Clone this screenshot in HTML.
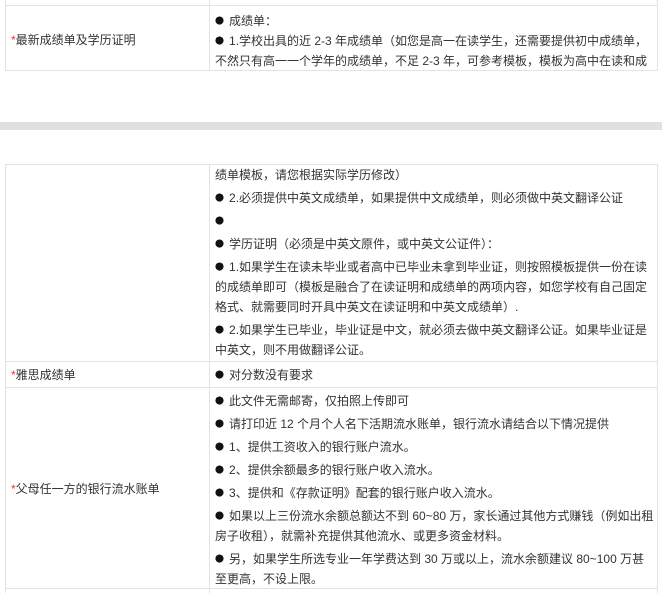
<!DOCTYPE html>
<html><head><meta charset="utf-8"><style>
body{margin:0;width:662px;height:593px;background:#fff;position:relative;overflow:hidden;font-family:"Liberation Sans","Noto Sans CJK SC",sans-serif;font-size:12px;color:#333}
.l{position:absolute;left:215px;height:20px;line-height:20px;white-space:nowrap}
.k{position:absolute;left:11px;height:20px;line-height:20px;white-space:nowrap}
.k b{color:#e33;font-weight:normal}
.h{position:absolute;left:5px;width:652px;height:1px;background:#e3e3e3}
.v{position:absolute;width:1px;background:#e3e3e3}
i{font-style:normal;font-family:"Noto Sans CJK SC",sans-serif;font-size:9px;margin-right:5px;color:#111;vertical-align:1px}
</style></head><body>
<div class="h" style="top:5px"></div><div class="h" style="top:70px"></div>
<div class="v" style="left:5px;top:0;height:71px"></div>
<div class="v" style="left:209px;top:0;height:71px"></div>
<div class="v" style="left:657px;top:0;height:71px"></div>
<div style="position:absolute;left:0;top:122px;width:662px;height:8px;background:#e0e0e0"></div>
<div class="h" style="top:164px"></div><div class="h" style="top:361px"></div><div class="h" style="top:387px"></div><div class="h" style="top:588px"></div>
<div class="v" style="left:5px;top:164px;height:429px"></div>
<div class="v" style="left:209px;top:164px;height:429px"></div>
<div class="v" style="left:657px;top:164px;height:429px"></div>

<div class="k" style="top:30px"><b>*</b>最新成绩单及学历证明</div>
<div class="l" style="top:11px"><i>●</i>成绩单：</div>
<div class="l" style="top:31px"><i>●</i>1.学校出具的近 2-3 年成绩单（如您是高一在读学生，还需要提供初中成绩单，</div>
<div class="l" style="top:51px">不然只有高一一个学年的成绩单，不足 2-3 年，可参考模板，模板为高中在读和成</div>

<div class="l" style="top:165px">绩单模板，请您根据实际学历修改）</div>
<div class="l" style="top:188px"><i>●</i>2.必须提供中英文成绩单，如果提供中文成绩单，则必须做中英文翻译公证</div>
<div class="l" style="top:211px"><i>●</i></div>
<div class="l" style="top:234px"><i>●</i>学历证明（必须是中英文原件，或中英文公证件）：</div>
<div class="l" style="top:257px"><i>●</i>1.如果学生在读未毕业或者高中已毕业未拿到毕业证，则按照模板提供一份在读</div>
<div class="l" style="top:277px">的成绩单即可（模板是融合了在读证明和成绩单的两项内容，如您学校有自己固定</div>
<div class="l" style="top:297px">格式、就需要同时开具中英文在读证明和中英文成绩单）.</div>
<div class="l" style="top:320px"><i>●</i>2.如果学生已毕业，毕业证是中文，就必须去做中英文翻译公证。如果毕业证是</div>
<div class="l" style="top:340px">中英文，则不用做翻译公证。</div>

<div class="k" style="top:365px"><b>*</b>雅思成绩单</div>
<div class="l" style="top:365px"><i>●</i>对分数没有要求</div>

<div class="k" style="top:479px"><b>*</b>父母任一方的银行流水账单</div>
<div class="l" style="top:391px"><i>●</i>此文件无需邮寄，仅拍照上传即可</div>
<div class="l" style="top:414px"><i>●</i>请打印近 12 个月个人名下活期流水账单，银行流水请结合以下情况提供</div>
<div class="l" style="top:437px"><i>●</i>1、提供工资收入的银行账户流水。</div>
<div class="l" style="top:460px"><i>●</i>2、提供余额最多的银行账户收入流水。</div>
<div class="l" style="top:483px"><i>●</i>3、提供和《存款证明》配套的银行账户收入流水。</div>
<div class="l" style="top:506px"><i>●</i>如果以上三份流水余额总额达不到 60~80 万，家长通过其他方式赚钱（例如出租</div>
<div class="l" style="top:526px">房子收租），就需补充提供其他流水、或更多资金材料。</div>
<div class="l" style="top:549px"><i>●</i>另，如果学生所选专业一年学费达到 30 万或以上，流水余额建议 80~100 万甚</div>
<div class="l" style="top:569px">至更高，不设上限。</div>
</body></html>
